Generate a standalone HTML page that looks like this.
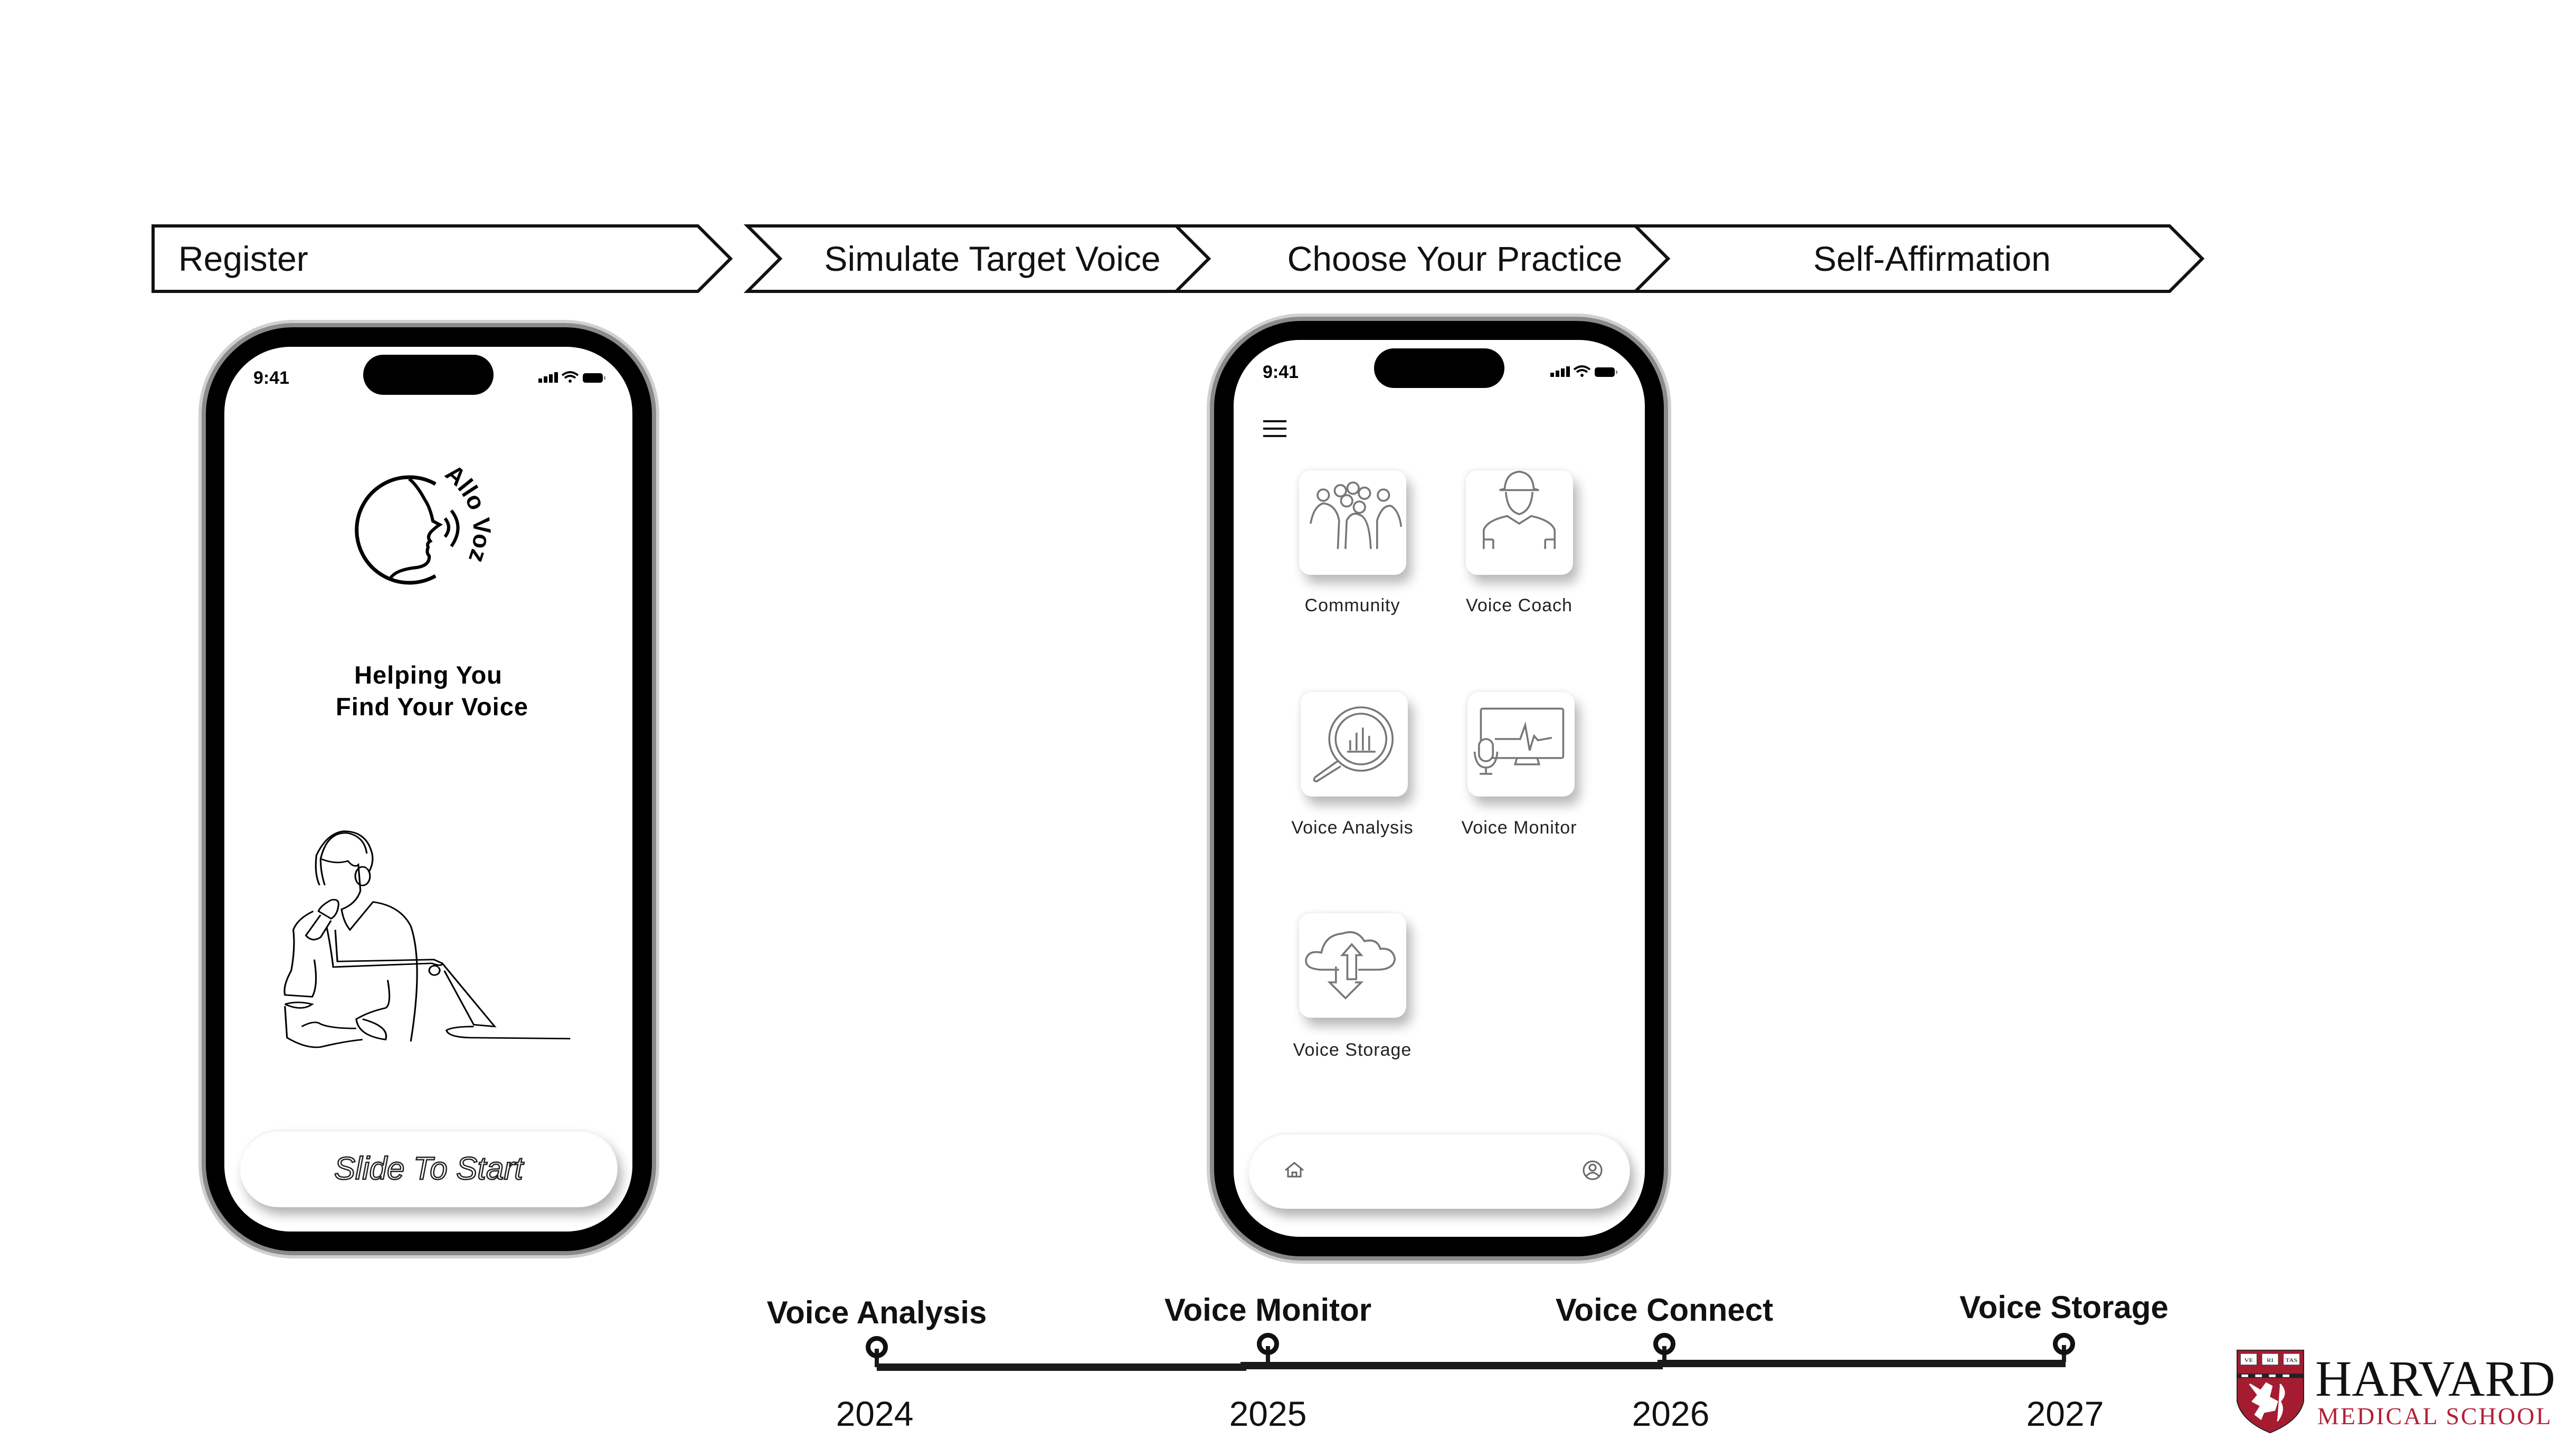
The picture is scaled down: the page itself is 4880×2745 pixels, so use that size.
<!DOCTYPE html>
<html><head><meta charset="utf-8">
<style>
body{margin:0;background:#fff;}
#c{position:relative;width:4880px;height:2745px;overflow:hidden;background:#fff;font-family:"Liberation Sans",sans-serif;}
.a{position:absolute;}
.phone{position:absolute;border-radius:165px;background:#000;box-shadow:0 0 0 8px #8a8a8a,0 0 0 14px #d0d0d0;}
.scr{position:absolute;background:#fff;border-radius:125px;overflow:hidden;}
.tile{position:absolute;width:203px;height:198px;background:#fff;border-radius:22px;box-shadow:10px 16px 22px rgba(0,0,0,.28),-3px -3px 8px rgba(0,0,0,.06);}
.tile svg g{transform-origin:101px 95px;transform:scale(1.2);}
.lbl{position:absolute;width:400px;text-align:center;font-size:34px;color:#222;letter-spacing:1px;}
.tl{position:absolute;font-size:60px;font-weight:bold;color:#111;transform:translateX(-50%);white-space:nowrap;}
.yr{position:absolute;font-size:66px;color:#111;transform:translateX(-50%);}
.pin{position:absolute;width:24px;height:24px;border:9px solid #111;border-radius:50%;transform:translate(-50%,-50%);}
</style></head><body><div id="c">

<svg class="a" style="left:0;top:0" width="4880" height="600">
<g fill="none" stroke="#111" stroke-width="6">
<polygon points="290,428 1322,428 1384,490 1322,552 290,552"/>
<polygon points="1416,428 2228,428 2290,490 2228,552 1416,552 1478,490"/>
<polyline points="2228,428 3098,428 3160,490 3098,552 2228,552"/>
<polyline points="3098,428 4110,428 4172,490 4110,552 3098,552"/>
</g>
<g font-family="Liberation Sans" font-size="66" fill="#111">
<text x="338" y="513">Register</text>
<text x="1880" y="513" text-anchor="middle">Simulate Target Voice</text>
<text x="2756" y="513" text-anchor="middle">Choose Your Practice</text>
<text x="3660" y="513" text-anchor="middle">Self-Affirmation</text>
</g>
</svg>

<!-- Phone 1 -->
<div class="phone" style="left:390px;top:620px;width:845px;height:1750px;"></div>
<div class="scr" style="left:425px;top:657px;width:773px;height:1676px;">
  <div class="a" style="left:55px;top:40px;font-size:34px;font-weight:bold;">9:41</div>
  <div class="a" style="left:263px;top:15px;width:247px;height:76px;border-radius:38px;background:#000;"></div>
  <svg class="a" style="left:595px;top:40px" width="130" height="40">
    <rect x="0" y="20" width="7" height="8"/><rect x="10" y="16" width="7" height="12"/><rect x="20" y="12" width="7" height="16"/><rect x="30" y="8" width="7" height="20"/>
    <path d="M45 14 Q60 2 75 14 M50 19 Q60 11 70 19" stroke="#000" stroke-width="4" fill="none"/><circle cx="60" cy="25" r="3"/>
    <rect x="84" y="10" width="38" height="18" rx="5"/><rect x="124" y="16" width="3" height="6" fill="#888"/>
  </svg>
  <svg class="a" style="left:240px;top:200px" width="320" height="300" viewBox="0 0 320 300">
    <defs><path id="ring" d="M175 45 A128 128 0 0 1 180 255"/></defs>
    <path d="M160 60 A100 100 0 1 0 160 234" fill="none" stroke="#000" stroke-width="7"/>
    <path d="M75 238 Q85 222 125 218 Q150 214 148 196 Q142 190 146 180 Q143 172 150 168 Q143 160 152 150 Q160 142 168 137 L155 130 Q150 105 140 90 Q125 62 110 50" fill="none" stroke="#000" stroke-width="6"/>
    <path d="M178 125 Q192 142 178 160 M190 110 Q215 142 190 178" fill="none" stroke="#000" stroke-width="6"/>
    <text font-size="46" font-weight="bold" font-family="Liberation Sans"><textPath href="#ring">Allo Voz</textPath></text>
  </svg>
  <div class="a" style="left:0;top:592px;width:773px;text-align:center;font-size:47px;font-weight:bold;line-height:60px;letter-spacing:1px;">Helping You<br>&nbsp;Find Your Voice</div>
  <svg class="a" style="left:75px;top:893px" width="620" height="437" viewBox="0 0 1560 1240" preserveAspectRatio="none" fill="none" stroke="#000" stroke-width="8">
    <path d="M265 360 Q240 300 250 200 Q300 80 380 70 Q480 70 510 170 Q530 230 500 290"/>
    <path d="M290 360 Q270 290 270 220 Q300 70 400 80 Q480 100 490 190"/>
    <path d="M275 220 Q340 250 400 230 Q430 270 450 250 L460 390 Q440 460 370 490 Q380 560 410 600 L520 450 Q650 470 700 580 Q760 780 700 1200"/>
    <path d="M490 270 A35 50 0 1 0 491 271"/>
    <path d="M320 440 Q360 430 355 470 Q350 520 320 540 L260 500 Q270 470 320 440 Z"/>
    <path d="M270 520 L200 630 Q230 670 270 640 L320 550"/>
    <path d="M235 500 Q160 540 140 600 Q150 700 130 820 Q90 900 100 950 L230 960 Q260 900 240 760"/>
    <path d="M100 1000 Q160 980 230 1000 Q180 1040 100 1000 M100 1010 L110 1180 Q200 1240 270 1230 Q380 1200 470 1190"/>
    <path d="M300 590 Q320 700 330 800 L800 780 Q850 800 850 780 L810 760 L350 770 L340 600"/>
    <path d="M830 800 A25 25 0 1 0 831 801 M860 820 L1000 1110 L1100 1120 L850 780"/>
    <path d="M1000 1120 Q900 1120 870 1140 Q880 1180 1000 1180 L1460 1185"/>
    <path d="M590 870 Q610 1000 580 1020 Q500 1040 440 1080 Q450 1170 580 1190 Q600 1120 470 1080"/>
    <path d="M180 1120 Q230 1090 260 1100 Q300 1130 440 1130"/>
  </svg>
  <div class="a" style="left:29px;top:1483px;width:716px;height:147px;border-radius:74px;background:#fff;box-shadow:8px 14px 20px rgba(0,0,0,.3),inset 0 2px 4px rgba(0,0,0,.08);"></div>
  <div class="a" style="left:29px;top:1522px;width:716px;text-align:center;font-size:60px;font-style:italic;color:#fff;-webkit-text-stroke:2.5px #222;letter-spacing:0px;">Slide To Start</div>
</div>

<!-- Phone 2 -->
<div class="phone" style="left:2300px;top:608px;width:852px;height:1772px;"></div>
<div class="scr" style="left:2337px;top:644px;width:779px;height:1699px;">
  <div class="a" style="left:55px;top:42px;font-size:34px;font-weight:bold;">9:41</div>
  <div class="a" style="left:266px;top:16px;width:247px;height:75px;border-radius:38px;background:#000;"></div>
  <svg class="a" style="left:600px;top:42px" width="130" height="40">
    <rect x="0" y="20" width="7" height="8"/><rect x="10" y="16" width="7" height="12"/><rect x="20" y="12" width="7" height="16"/><rect x="30" y="8" width="7" height="20"/>
    <path d="M45 14 Q60 2 75 14 M50 19 Q60 11 70 19" stroke="#000" stroke-width="4" fill="none"/><circle cx="60" cy="25" r="3"/>
    <rect x="84" y="10" width="38" height="18" rx="5"/><rect x="124" y="16" width="3" height="6" fill="#888"/>
  </svg>
  <div class="a" style="left:56px;top:152px;width:44px;height:4px;background:#111;box-shadow:0 14px 0 #111,0 28px 0 #111;"></div>

  <div class="tile" style="left:124px;top:247px;"><svg width="203" height="198" viewBox="0 0 203 198" fill="none" stroke="#777" stroke-width="3"><g><circle cx="82" cy="48" r="9"/><circle cx="102" cy="44" r="9"/><circle cx="120" cy="52" r="9"/><circle cx="92" cy="64" r="9"/><circle cx="112" cy="74" r="9"/><circle cx="55" cy="55" r="9"/><circle cx="150" cy="55" r="9"/><path d="M35 100 Q40 72 55 68 Q75 70 80 95 L78 140 M90 140 L92 95 Q100 80 112 86 Q128 90 130 140 M140 140 L140 95 Q148 70 162 72 Q175 80 178 105"/></g></svg></div>
  <div class="tile" style="left:440px;top:247px;"><svg width="203" height="198" viewBox="0 0 203 198" fill="none" stroke="#777" stroke-width="3"><g><path d="M78 45 Q80 20 101 18 Q122 20 124 45 L132 47 L70 47 Z"/><path d="M80 50 Q82 80 101 85 Q120 80 122 50"/><path d="M45 140 L45 110 Q50 95 82 88 L101 100 L120 88 Q152 95 157 110 L157 140 M60 125 L60 140 M142 125 L142 140 M45 125 L60 125 M142 125 L157 125"/></g></svg></div>

  <div class="tile" style="left:127px;top:667px;"><svg width="203" height="198" viewBox="0 0 203 198" fill="none" stroke="#777" stroke-width="3"><g><circle cx="112" cy="90" r="50"/><circle cx="112" cy="90" r="40"/><path d="M75 125 L40 150 Q35 156 42 157 L80 133 M90 110 L135 110 M95 108 L95 92 M105 108 L105 80 M115 108 L115 72 M125 108 L125 85"/></g></svg></div>
  <div class="tile" style="left:443px;top:667px;"><svg width="203" height="198" viewBox="0 0 203 198" fill="none" stroke="#777" stroke-width="3"><g><rect x="38" y="42" width="130" height="78" rx="3"/><path d="M95 120 L92 130 L130 130 L127 120 M60 90 L100 90 L108 68 L115 108 L122 85 L128 92 L150 88"/><rect x="35" y="90" width="22" height="35" rx="11" fill="#fff"/><path d="M28 110 Q30 135 46 135 Q62 135 64 110 M46 135 L46 145 M36 145 L56 145"/></g></svg></div>

  <div class="tile" style="left:124px;top:1086px;"><svg width="203" height="198" viewBox="0 0 203 198" fill="none" stroke="#777" stroke-width="3"><g><path d="M80 105 L50 105 Q25 103 28 88 Q32 74 52 78 Q58 50 85 48 Q108 40 120 60 Q140 55 145 72 Q165 70 168 88 Q166 105 140 105 L110 105"/><path d="M100 65 L85 82 L93 82 L93 120 L107 120 L107 82 L115 82 Z"/><path d="M75 100 L75 125 L65 125 L90 150 L115 125 L105 125"/></g></svg></div>

  <div class="lbl" style="left:25px;top:484px;">Community</div>
  <div class="lbl" style="left:341px;top:484px;">Voice Coach</div>
  <div class="lbl" style="left:25px;top:905px;">Voice Analysis</div>
  <div class="lbl" style="left:341px;top:905px;">Voice Monitor</div>
  <div class="lbl" style="left:25px;top:1326px;">Voice Storage</div>

  <div class="a" style="left:28px;top:1502px;width:723px;height:144px;border-radius:72px;background:#fff;box-shadow:8px 14px 20px rgba(0,0,0,.3),inset 0 2px 4px rgba(0,0,0,.08);"></div>
  <svg class="a" style="left:95px;top:1555px" width="40" height="34" fill="none" stroke="#666" stroke-width="3"><path d="M3 18 L20 4 L37 18 M8 14 L8 30 L32 30 L32 14 M16 30 L16 22 L24 22 L24 30"/></svg>
  <svg class="a" style="left:658px;top:1553px" width="44" height="40" fill="none" stroke="#666" stroke-width="3"><circle cx="22" cy="20" r="17"/><circle cx="22" cy="15" r="6"/><path d="M10 31 Q22 18 34 31"/></svg>
</div>

<!-- Timeline -->
<div class="a" style="left:1661px;top:2583px;width:700px;height:14px;background:#1a1a1a;"></div>
<div class="a" style="left:2350px;top:2580px;width:800px;height:14px;background:#1a1a1a;"></div>
<div class="a" style="left:3140px;top:2576px;width:773px;height:14px;background:#1a1a1a;"></div>
<div class="a" style="left:1657px;top:2555px;width:8px;height:35px;background:#1a1a1a;"></div>
<div class="a" style="left:2398px;top:2550px;width:8px;height:35px;background:#1a1a1a;"></div>
<div class="a" style="left:3149px;top:2550px;width:8px;height:32px;background:#1a1a1a;"></div>
<div class="a" style="left:3906px;top:2548px;width:8px;height:32px;background:#1a1a1a;"></div>
<div class="pin" style="left:1661px;top:2552px;"></div>
<div class="pin" style="left:2402px;top:2546px;"></div>
<div class="pin" style="left:3153px;top:2546px;"></div>
<div class="pin" style="left:3910px;top:2546px;"></div>
<div class="tl" style="left:1661px;top:2452px;">Voice Analysis</div>
<div class="tl" style="left:2402px;top:2447px;">Voice Monitor</div>
<div class="tl" style="left:3153px;top:2447px;">Voice Connect</div>
<div class="tl" style="left:3910px;top:2442px;">Voice Storage</div>
<div class="yr" style="left:1657px;top:2640px;">2024</div>
<div class="yr" style="left:2402px;top:2640px;">2025</div>
<div class="yr" style="left:3165px;top:2640px;">2026</div>
<div class="yr" style="left:3912px;top:2640px;">2027</div>

<!-- Harvard logo -->
<svg class="a" style="left:4236px;top:2556px" width="130" height="160" viewBox="0 0 125 194" preserveAspectRatio="none">
  <path d="M2 2 L123 2 L123 120 Q115 165 62 192 Q10 165 2 120 Z" fill="#a51c30" stroke="#222" stroke-width="2"/>
  <rect x="8" y="10" width="30" height="26" fill="#fff" stroke="#333"/><rect x="47" y="10" width="30" height="26" fill="#fff" stroke="#333"/><rect x="86" y="10" width="30" height="26" fill="#fff" stroke="#333"/>
  <text x="23" y="29" font-size="12" text-anchor="middle" font-family="Liberation Serif">VE</text><text x="62" y="29" font-size="12" text-anchor="middle" font-family="Liberation Serif">RI</text><text x="101" y="29" font-size="12" text-anchor="middle" font-family="Liberation Serif">TAS</text>
  <rect x="2" y="56" width="121" height="10" fill="#222"/><rect x="10" y="58" width="12" height="6" fill="#fff"/><rect x="35" y="58" width="12" height="6" fill="#fff"/><rect x="60" y="58" width="12" height="6" fill="#fff"/><rect x="85" y="58" width="12" height="6" fill="#fff"/>
  <path d="M25 80 L45 95 L55 78 L65 85 L60 110 L75 120 L70 140 L50 145 L45 160 L35 150 L45 130 L30 120 L40 105 Z M80 80 Q95 100 80 120 Q90 140 75 165" fill="#fff" stroke="#fff" stroke-width="3"/>
</svg>
<div class="a" style="left:4386px;top:2564px;font-family:'Liberation Serif',serif;font-size:96px;line-height:96px;color:#111;">HARVARD</div>
<div class="a" style="left:4390px;top:2660px;font-family:'Liberation Serif',serif;font-size:46px;line-height:46px;color:#b51e36;letter-spacing:3px;">MEDICAL SCHOOL</div>

</div></body></html>
